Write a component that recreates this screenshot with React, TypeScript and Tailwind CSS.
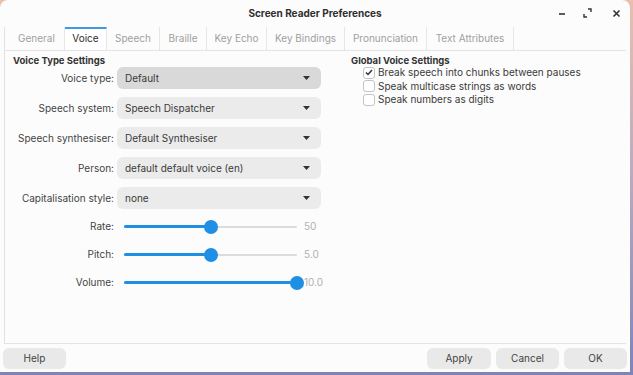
import React from "react";

const font = { fontFamily: "Inter, 'Noto Sans', sans-serif" };

const tabs = [
  { name: "General", w: 56 },
  { name: "Voice", w: 42, active: true },
  { name: "Speech", w: 53 },
  { name: "Braille", w: 47 },
  { name: "Key Echo", w: 60 },
  { name: "Key Bindings", w: 78 },
  { name: "Pronunciation", w: 82 },
  { name: "Text Attributes", w: 87 },
];

const combos = [
  { label: "Voice type:", value: "Default", hover: true, mt: "mt-0" },
  { label: "Speech system:", value: "Speech Dispatcher", mt: "mt-[8px]" },
  { label: "Speech synthesiser:", value: "Default Synthesiser", mt: "mt-[8px]" },
  { label: "Person:", value: "default default voice (en)", mt: "mt-[8px]" },
  { label: "Capitalisation style:", value: "none", mt: "mt-[8px]" },
];

const sliders = [
  { label: "Rate:", value: "50", pct: 50 },
  { label: "Pitch:", value: "5.0", pct: 50 },
  { label: "Volume:", value: "10.0", pct: 100 },
];

const checks = [
  { text: "Break speech into chunks between pauses", on: true },
  { text: "Speak multicase strings as words", on: false },
  { text: "Speak numbers as digits", on: false },
];

function Combo({ value, hover }: { value: string; hover?: boolean }) {
  return (
    <div
      className={`flex h-[22px] w-[204px] items-center justify-between rounded-[6px] pl-[8px] pr-[11px] text-[10px] text-[#3a3a3a] ${
        hover ? "bg-[#d9d9d9]" : "bg-[#ebebeb]"
      }`}
    >
      <span>{value}</span>
      <svg width="7" height="4" viewBox="0 0 7 4">
        <path d="M0 0h7L3.5 4z" fill="#333" />
      </svg>
    </div>
  );
}

function Slider({ pct }: { pct: number }) {
  return (
    <div className="relative h-[14px] w-[173px]">
      <div className="absolute left-0 right-0 top-[6px] h-[2px] rounded bg-[#dcdcdc]" />
      <div
        className="absolute left-0 top-[5px] h-[3px] rounded bg-[#1f8fe6]"
        style={{ width: `${pct}%` }}
      />
      <div
        className="absolute top-0 h-[14px] w-[14px] -translate-x-1/2 rounded-full bg-[#1f8fe6]"
        style={{ left: `${pct}%` }}
      />
    </div>
  );
}

function Button({ children, w }: { children: React.ReactNode; w: string }) {
  return (
    <div
      className={`flex h-[21px] ${w} items-center justify-center rounded-[6px] bg-[#e9e9e9] text-[10px] text-[#444]`}
    >
      {children}
    </div>
  );
}

export default function App() {
  return (
    <div
      className="h-[375px] w-[633px] overflow-hidden bg-gradient-to-b from-[#e9bfae] via-[#b8a8c0] to-[#7d84b8] pb-[3px] pr-[3px]"
      style={font}
    >
      <div className="flex h-full w-full flex-col rounded-t-[8px] bg-[#fcfcfc]">
        {/* title bar */}
        <div className="relative flex h-[27px] items-center justify-center">
          <span className="text-[10px] font-bold text-[#2e2e2e]">Screen Reader Preferences</span>
          <div className="absolute right-[9px] top-[8px] flex items-center text-[#333]">
            <svg width="8" height="10" viewBox="0 0 8 10">
              <path d="M1 6h6" stroke="#333" strokeWidth="1.6" />
            </svg>
            <svg className="ml-[17px]" width="9" height="10" viewBox="0 0 9 10">
              <path d="M5 1h3v3M1 6v3h3" stroke="#333" strokeWidth="1.4" fill="none" />
            </svg>
            <svg className="ml-[20px]" width="9" height="10" viewBox="0 0 9 10">
              <path d="M1.5 2.5l6 6M7.5 2.5l-6 6" stroke="#333" strokeWidth="1.6" />
            </svg>
          </div>
        </div>

        {/* notebook */}
        <div className="ml-[4px] mr-[4px] flex flex-1 flex-col border-l border-[#e2e2e2]">
          <div className="flex h-[24px] border-b border-[#e4e4e4] pl-[4px]">
            {tabs.map((t) => (
              <div
                key={t.name}
                className={`flex items-center justify-center border-r border-[#e6e6e6] text-[10px] ${
                  t.active
                    ? "border-t-[2px] border-t-[#3e9be0] bg-white pb-[2px] text-[#2e2e2e]"
                    : "text-[#a0a0a0]"
                }`}
                style={{ width: t.w }}
              >
                {t.name}
              </div>
            ))}
          </div>

          <div className="flex flex-1 pl-[8px] pt-[4px]">
            {/* voice type settings */}
            <div className="w-[338px]">
              <div className="text-[9.5px] font-bold leading-[12px] text-[#333]">Voice Type Settings</div>
              {combos.map((c) => (
                <div key={c.label} className={`flex items-center ${c.mt}`}>
                  <div className="w-[104px] pr-[3px] text-right text-[10px] text-[#444]">{c.label}</div>
                  <Combo value={c.value} hover={c.hover} />
                </div>
              ))}
              <div className="mt-[10px] flex flex-col gap-[13px]">
                {sliders.map((s) => (
                  <div key={s.label} className="flex items-center">
                    <div className="w-[104px] pr-[3px] text-right text-[10px] text-[#444]">{s.label}</div>
                    <div className="ml-[7px]">
                      <Slider pct={s.pct} />
                    </div>
                    <div className="ml-[7px] text-[10px] text-[#b0b0b0]">{s.value}</div>
                  </div>
                ))}
              </div>
            </div>

            {/* global voice settings */}
            <div>
              <div className="text-[9.5px] font-bold leading-[12px] text-[#333]">Global Voice Settings</div>
              <div className="mt-[-1px] flex flex-col gap-[0.5px] pl-[12px]">
                {checks.map((c) => (
                  <div key={c.text} className="flex h-[13px] items-center gap-[3px]">
                    <div className="flex h-[12px] w-[12px] items-center justify-center rounded-[3px] border border-[#c4c4c4] bg-white">
                      {c.on && (
                        <svg width="8" height="7" viewBox="0 0 8 7">
                          <path d="M1 3.5l2 2L7 1" stroke="#333" strokeWidth="1.5" fill="none" />
                        </svg>
                      )}
                    </div>
                    <span className="text-[10px] text-[#3a3a3a]">{c.text}</span>
                  </div>
                ))}
              </div>
            </div>
          </div>
          <div className="border-t border-[#e4e4e4]" />
        </div>

        {/* buttons */}
        <div className="flex items-center px-[3px] pb-[3px] pt-[4px]">
          <Button w="w-[63px]">Help</Button>
          <div className="flex-1" />
          <div className="flex gap-[5px]">
            <Button w="w-[64px]">Apply</Button>
            <Button w="w-[63px]">Cancel</Button>
            <Button w="w-[63px]">OK</Button>
          </div>
        </div>
      </div>
    </div>
  );
}
